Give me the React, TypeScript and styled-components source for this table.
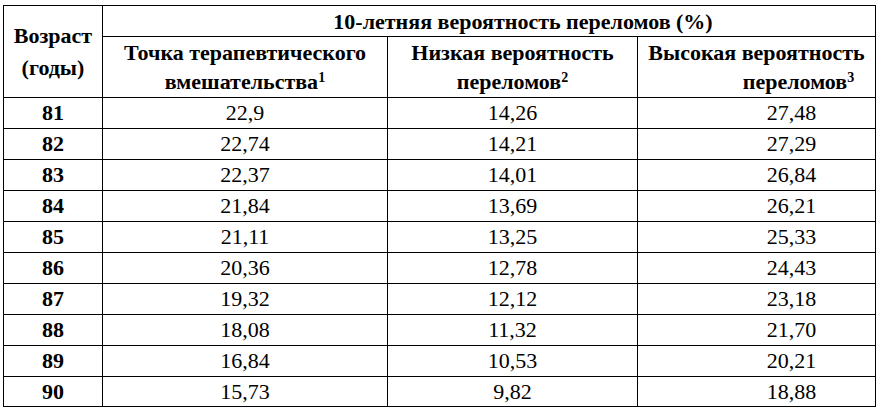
import React from "react";
import styled, { createGlobalStyle } from "styled-components";

const Global = createGlobalStyle`
  html, body { margin: 0; padding: 0; background: #ffffff; }
  body { font-family: "Liberation Serif", "Times New Roman", serif; color: #000; }
`;

const Page = styled.div`
  padding: 5px 0 0 3px;
`;

const Table = styled.table`
  border-collapse: collapse;
  table-layout: fixed;
  width: 872px;
  font-family: "Liberation Serif", "Times New Roman", serif;
  font-size: 22px;
  color: #000;
`;

const HeadRow = styled.tr<{ $h: number }>`
  height: ${(p) => p.$h}px;
`;

const DataRow = styled.tr<{ $h: number }>`
  height: ${(p) => p.$h}px;
`;

const Th = styled.th<{ $shift?: number }>`
  border: 1px solid #000;
  font-weight: 700;
  text-align: center;
  vertical-align: middle;
  padding: 0 0 0 ${(p) => p.$shift ?? 0}px;
  line-height: 29px;
  white-space: nowrap;
`;

const Line = styled.div<{ $shift?: number; $gap?: number }>`
  padding-left: ${(p) => p.$shift ?? 0}px;
  margin-top: ${(p) => p.$gap ?? 0}px;
`;

const Td = styled.td<{ $bold?: boolean; $shift?: number }>`
  border: 1px solid #000;
  text-align: center;
  vertical-align: middle;
  padding: 0 0 0 ${(p) => p.$shift ?? 0}px;
  font-weight: ${(p) => (p.$bold ? 700 : 400)};
  line-height: 24px;
`;

const Sup = styled.sup`
  font-size: 14px;
  line-height: 0;
  vertical-align: 7px;
`;

const rows: [string, string, string, string][] = [
  ["81", "22,9", "14,26", "27,48"],
  ["82", "22,74", "14,21", "27,29"],
  ["83", "22,37", "14,01", "26,84"],
  ["84", "21,84", "13,69", "26,21"],
  ["85", "21,11", "13,25", "25,33"],
  ["86", "20,36", "12,78", "24,43"],
  ["87", "19,32", "12,12", "23,18"],
  ["88", "18,08", "11,32", "21,70"],
  ["89", "16,84", "10,53", "20,21"],
  ["90", "15,73", "9,82", "18,88"],
];

export default function App() {
  return (
    <Page>
      <Global />
      <Table>
        <colgroup>
          <col style={{ width: 99 }} />
          <col style={{ width: 285 }} />
          <col style={{ width: 250 }} />
          <col style={{ width: 238 }} />
        </colgroup>
        <thead>
          <HeadRow $h={31}>
            <Th rowSpan={2}>
              <Line>Возраст</Line>
              <Line $gap={3}>(годы)</Line>
            </Th>
            <Th colSpan={3} $shift={68}>
              10-летняя вероятность переломов (%)
            </Th>
          </HeadRow>
          <HeadRow $h={61}>
            <Th>
              <Line>Точка терапевтического</Line>
              <Line>
                вмешательства<Sup>1</Sup>
              </Line>
            </Th>
            <Th>
              <Line>Низкая вероятность</Line>
              <Line>
                переломов<Sup>2</Sup>
              </Line>
            </Th>
            <Th>
              <Line>Высокая вероятность</Line>
              <Line $shift={84}>
                переломов<Sup>3</Sup>
              </Line>
            </Th>
          </HeadRow>
        </thead>
        <tbody>
          {rows.map((r, i) => (
            <DataRow key={r[0]} $h={i === rows.length - 1 ? 30 : 31}>
              <Td $bold>{r[0]}</Td>
              <Td>{r[1]}</Td>
              <Td>{r[2]}</Td>
              <Td $shift={70}>{r[3]}</Td>
            </DataRow>
          ))}
        </tbody>
      </Table>
    </Page>
  );
}
